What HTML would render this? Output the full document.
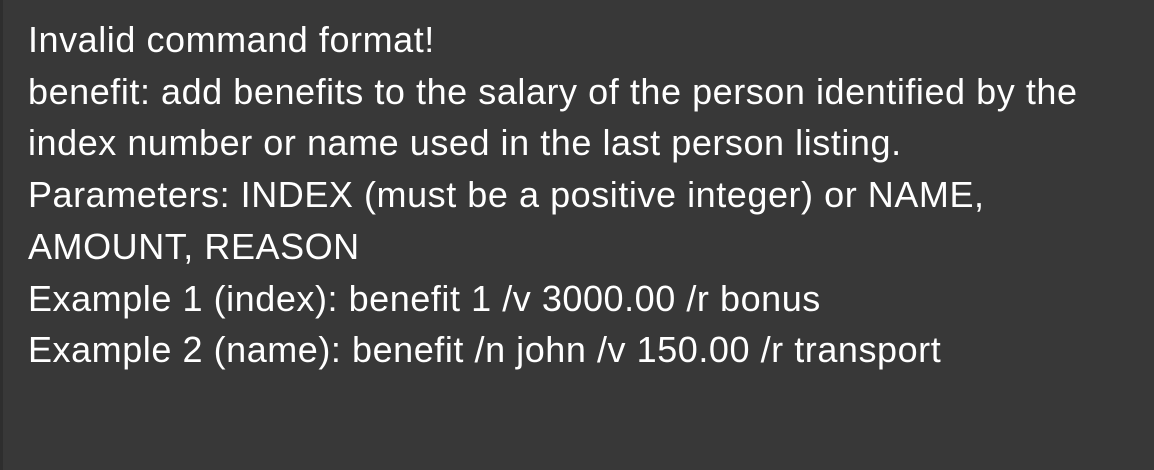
<!DOCTYPE html>
<html><head><meta charset="utf-8"><style>
html,body{margin:0;padding:0;}
body{width:1154px;height:470px;background:#383838;overflow:hidden;position:relative;border-left:3px solid #2e2e2e;box-sizing:border-box;}
.t{position:absolute;left:25px;top:14px;color:#fff;font-family:"Liberation Sans",sans-serif;font-size:36px;line-height:51.7px;letter-spacing:0.55px;white-space:pre;}
</style></head><body>
<div class="t">Invalid command format!
benefit: add benefits to the salary of the person identified by the
index number or name used in the last person listing.
Parameters: INDEX (must be a positive integer) or NAME,
AMOUNT, REASON
Example 1 (index): benefit 1 /v 3000.00 /r bonus
Example 2 (name): benefit /n john /v 150.00 /r transport</div>
</body></html>
